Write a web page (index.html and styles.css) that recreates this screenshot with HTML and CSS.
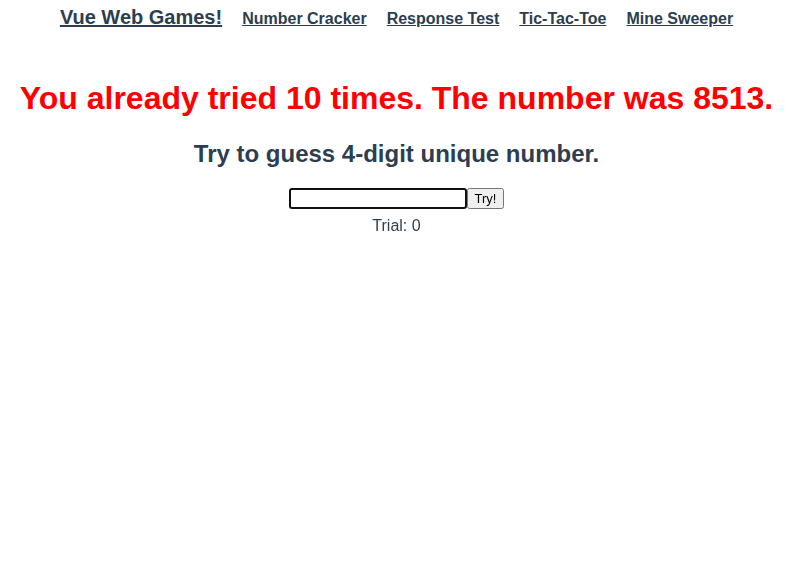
FILE: index.html
```html
<!DOCTYPE html>
<html>
<head>
<meta charset="utf-8">
<link rel="stylesheet" href="styles.css">
</head>
<body>
<div class="app">
  <nav class="nav">
    <a class="brand" href="#">Vue Web Games!</a>
    <a class="link" href="#">Number Cracker</a>
    <a class="link" href="#">Response Test</a>
    <a class="link" href="#">Tic-Tac-Toe</a>
    <a class="link" href="#">Mine Sweeper</a>
  </nav>
  <h1 class="result">You already tried 10 times. The number was 8513.</h1>
  <h2 class="prompt">Try to guess 4-digit unique number.</h2>
  <div class="form">
    <input class="guess" type="text" autofocus><button class="try">Try!</button>
  </div>
  <div class="trial">Trial: 0</div>
</div>
</body>
</html>
```
FILE: styles.css
```css
body {
  margin: 6px 8px 8px;
  background: #fff;
}
.app {
  font-family: "Liberation Sans", Arial, sans-serif;
  color: #2c3e50;
  text-align: center;
}
.nav {
  display: flex;
  justify-content: center;
  align-items: baseline;
  gap: 20px;
}
.nav a {
  color: #2c3e50;
  font-weight: bold;
  text-decoration: underline;
}
.brand {
  font-size: 20px;
}
.link {
  font-size: 16px;
}
.result {
  color: red;
  font-size: 32px;
  margin: 51px 0 0;
}
.prompt {
  font-size: 24px;
  margin: 23px 0 0;
}
.form {
  margin-top: 20px;
  display: flex;
  justify-content: center;
}
.guess {
  width: 170px;
  height: 15px;
  font-size: 13px;
}
.try {
  font-size: 13px;
}
.trial {
  margin-top: 8px;
  font-size: 16px;
}
```
